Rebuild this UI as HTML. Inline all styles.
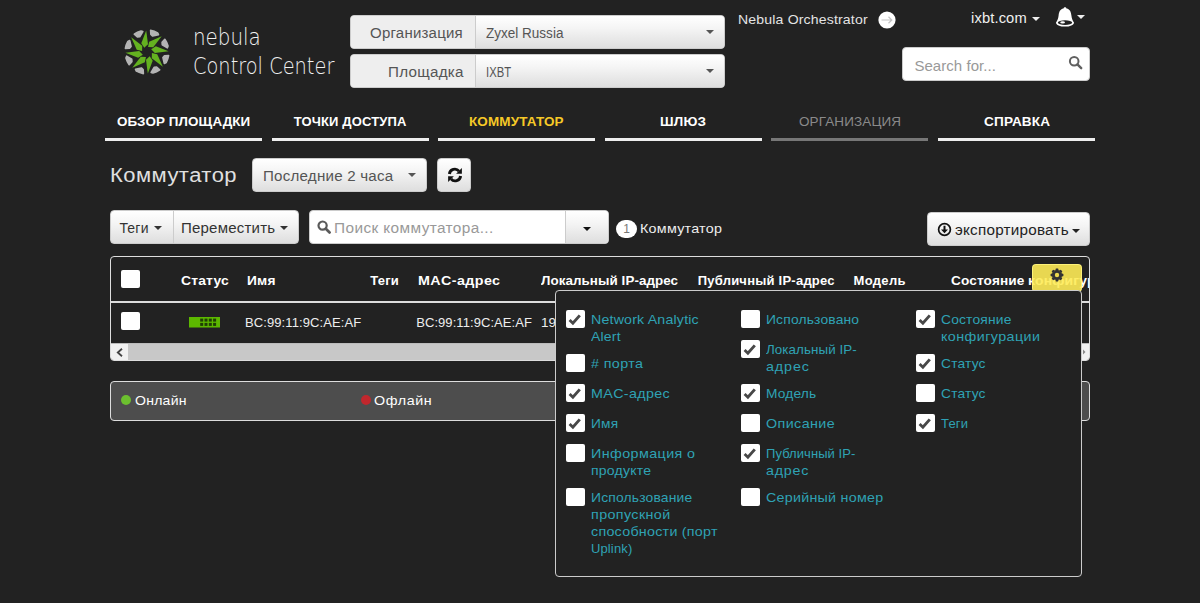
<!DOCTYPE html>
<html lang="ru"><head><meta charset="utf-8"><title>Nebula Control Center</title><style>
html,body{margin:0;padding:0}
body{width:1200px;height:603px;background:#222;position:relative;overflow:hidden;font-family:"Liberation Sans",sans-serif}
.abs{position:absolute}
.t{position:absolute;white-space:nowrap;line-height:1}
.btn{box-sizing:border-box;border:1px solid #ccc;border-radius:4px;background:linear-gradient(#fff,#f4f4f4 40%,#dedede)}
.grad{background:linear-gradient(#fff,#f4f4f4 40%,#dedede)}
.hsel{box-sizing:border-box;border:1px solid #ccc;border-radius:4px;overflow:hidden;background:#eee}
.hsel .lab{position:absolute;left:0;top:0;width:124px;height:100%;background:#eee;border-right:1px solid #ccc}
.hsel .val{position:absolute;left:125px;top:0;right:0;height:100%;background:linear-gradient(#fff,#f4f4f4 40%,#dedede)}
.caret{position:absolute;width:0;height:0;border-left:4px solid transparent;border-right:4px solid transparent;border-top:4px solid #555}
.cb{position:absolute;width:19px;height:18px;background:#fff;border-radius:2px}
</style></head><body>
<svg class="abs" style="left:120.6px;top:26.0px" width="52" height="52" viewBox="-26 -26 52 52"><g transform="rotate(0)"><path d="M-0.8,-21.6 L-5.7,-8.8 L-2.7,-4.2 L1.0,-7.8 Z" fill="#64b220"/><path d="M3.61,-21.60 A21.9,21.9 0 0 1 10.62,-19.15 L11.48,-17.34 L5.64,-15.93 L3.87,-17.48 Z" fill="#b4b4b4" stroke="#b4b4b4" stroke-width="1.6" stroke-linejoin="round"/></g><g transform="rotate(45)"><path d="M-0.8,-21.6 L-5.7,-8.8 L-2.7,-4.2 L1.0,-7.8 Z" fill="#64b220"/><path d="M3.61,-21.60 A21.9,21.9 0 0 1 10.62,-19.15 L11.48,-17.34 L5.64,-15.93 L3.87,-17.48 Z" fill="#b4b4b4" stroke="#b4b4b4" stroke-width="1.6" stroke-linejoin="round"/></g><g transform="rotate(90)"><path d="M-0.8,-21.6 L-5.7,-8.8 L-2.7,-4.2 L1.0,-7.8 Z" fill="#64b220"/><path d="M3.61,-21.60 A21.9,21.9 0 0 1 10.62,-19.15 L11.48,-17.34 L5.64,-15.93 L3.87,-17.48 Z" fill="#b4b4b4" stroke="#b4b4b4" stroke-width="1.6" stroke-linejoin="round"/></g><g transform="rotate(135)"><path d="M-0.8,-21.6 L-5.7,-8.8 L-2.7,-4.2 L1.0,-7.8 Z" fill="#64b220"/><path d="M3.61,-21.60 A21.9,21.9 0 0 1 10.62,-19.15 L11.48,-17.34 L5.64,-15.93 L3.87,-17.48 Z" fill="#b4b4b4" stroke="#b4b4b4" stroke-width="1.6" stroke-linejoin="round"/></g><g transform="rotate(180)"><path d="M-0.8,-21.6 L-5.7,-8.8 L-2.7,-4.2 L1.0,-7.8 Z" fill="#64b220"/><path d="M3.61,-21.60 A21.9,21.9 0 0 1 10.62,-19.15 L11.48,-17.34 L5.64,-15.93 L3.87,-17.48 Z" fill="#b4b4b4" stroke="#b4b4b4" stroke-width="1.6" stroke-linejoin="round"/></g><g transform="rotate(225)"><path d="M-0.8,-21.6 L-5.7,-8.8 L-2.7,-4.2 L1.0,-7.8 Z" fill="#64b220"/><path d="M3.61,-21.60 A21.9,21.9 0 0 1 10.62,-19.15 L11.48,-17.34 L5.64,-15.93 L3.87,-17.48 Z" fill="#b4b4b4" stroke="#b4b4b4" stroke-width="1.6" stroke-linejoin="round"/></g><g transform="rotate(270)"><path d="M-0.8,-21.6 L-5.7,-8.8 L-2.7,-4.2 L1.0,-7.8 Z" fill="#64b220"/><path d="M3.61,-21.60 A21.9,21.9 0 0 1 10.62,-19.15 L11.48,-17.34 L5.64,-15.93 L3.87,-17.48 Z" fill="#b4b4b4" stroke="#b4b4b4" stroke-width="1.6" stroke-linejoin="round"/></g><g transform="rotate(315)"><path d="M-0.8,-21.6 L-5.7,-8.8 L-2.7,-4.2 L1.0,-7.8 Z" fill="#64b220"/><path d="M3.61,-21.60 A21.9,21.9 0 0 1 10.62,-19.15 L11.48,-17.34 L5.64,-15.93 L3.87,-17.48 Z" fill="#b4b4b4" stroke="#b4b4b4" stroke-width="1.6" stroke-linejoin="round"/></g></svg>
<span class="t" style="left:193.1px;top:26.2px;font-size:22.5px;font-weight:200;color:#f0f0f0;transform:scaleX(0.8835);transform-origin:0 0;font-family:'DejaVu Sans Light','DejaVu Sans',sans-serif;font-weight:200">nebula</span>
<span class="t" style="left:193.1px;top:55.4px;font-size:22.5px;font-weight:200;color:#f0f0f0;transform:scaleX(0.8607);transform-origin:0 0;font-family:'DejaVu Sans Light','DejaVu Sans',sans-serif;font-weight:200">Control Center</span>
<div class="abs hsel" style="left:350px;top:15px;width:375px;height:34px"><div class="lab"></div><div class="val"></div><i class="caret" style="left:355px;top:13.5px;border-top-color:#555"></i></div><span class="t" style="left:370.3px;top:26.3px;font-size:14px;font-weight:400;color:#555;letter-spacing:0.19px;transform:scaleX(1.0736);transform-origin:0 0;">Организация</span><span class="t" style="left:485.7px;top:26.3px;font-size:14px;font-weight:400;color:#555;transform:scaleX(0.9661);transform-origin:0 0;">Zyxel Russia</span>
<div class="abs hsel" style="left:350px;top:54px;width:375px;height:34px"><div class="lab"></div><div class="val"></div><i class="caret" style="left:355px;top:13.5px;border-top-color:#555"></i></div><span class="t" style="left:387.5px;top:65.2px;font-size:14px;font-weight:400;color:#555;letter-spacing:0.25px;transform:scaleX(1.0845);transform-origin:0 0;">Площадка</span><span class="t" style="left:485.7px;top:65.2px;font-size:14px;font-weight:400;color:#555;transform:scaleX(0.8039);transform-origin:0 0;">IXBT</span>
<span class="t" style="left:738.3px;top:12.7px;font-size:13px;font-weight:400;color:#e4e4e4;letter-spacing:0.16px;transform:scaleX(1.0806);transform-origin:0 0;">Nebula Orchestrator</span>
<svg class="abs" style="left:877.5px;top:10.5px" width="18" height="18" viewBox="0 0 18 18"><circle cx="9" cy="9" r="8.6" fill="#fff"/><path d="M3.5,9 H13.5 M10.5,5.8 L13.8,9 L10.5,12.2" fill="none" stroke="#c4c4c4" stroke-width="1.2"/></svg>
<span class="t" style="left:971.1px;top:10.6px;font-size:14px;font-weight:400;color:#f0f0f0;letter-spacing:0.12px;transform:scaleX(1.0517);transform-origin:0 0;">ixbt.com</span>
<i class="caret abs" style="left:1032px;top:17px;border-top-color:#eee"></i>
<svg class="abs" style="left:1054px;top:6px" width="22" height="22" viewBox="0 0 22 22">
<path d="M11,1.2 C11.9,1.2 12.4,1.8 12.5,2.5 C16.2,3.2 17.1,6.4 17.4,9.6 C17.7,12.6 18.5,14.6 20,16.4 C20,19 15.8,20.6 11,20.6 C6.2,20.6 2,19 2,16.4 C3.5,14.6 4.3,12.6 4.6,9.6 C4.9,6.4 5.8,3.2 9.5,2.5 C9.6,1.8 10.1,1.2 11,1.2 Z" fill="#fff"/>
<ellipse cx="11" cy="16.6" rx="7.2" ry="2.3" fill="#222"/>
<ellipse cx="8.6" cy="16.4" rx="2.4" ry="1.1" fill="#fff"/>
</svg>
<i class="caret abs" style="left:1077px;top:15px;border-top-color:#eee"></i>
<div class="abs" style="left:902px;top:47px;width:188px;height:34px;box-sizing:border-box;background:#fff;border:1px solid #ccc;border-radius:4px"></div>
<span class="t" style="left:914.4px;top:57.5px;font-size:15px;font-weight:400;color:#999;letter-spacing:0.05px;">Search for...</span>
<svg class="abs" style="left:1068px;top:54.6px" width="15" height="15" viewBox="0 0 15 15"><circle cx="6.2" cy="6.2" r="4.3" fill="none" stroke="#606060" stroke-width="2"/><path d="M9.4,9.4 L13.2,13.2" stroke="#606060" stroke-width="2.4" stroke-linecap="round"/></svg>
<div class="abs" style="left:105.0px;top:138px;width:157px;height:3px;background:#eee"></div>
<span class="t" style="left:116.9px;top:115.0px;font-size:13px;font-weight:700;color:#fff;letter-spacing:0.10px;transform:scaleX(1.0314);transform-origin:0 0;">ОБЗОР ПЛОЩАДКИ</span>
<div class="abs" style="left:271.6px;top:138px;width:157px;height:3px;background:#eee"></div>
<span class="t" style="left:293.7px;top:115.0px;font-size:13px;font-weight:700;color:#fff;letter-spacing:0.15px;">ТОЧКИ ДОСТУПА</span>
<div class="abs" style="left:438.2px;top:138px;width:157px;height:3px;background:#eee"></div>
<span class="t" style="left:469.4px;top:115.0px;font-size:13px;font-weight:700;color:#f6c927;letter-spacing:0.12px;transform:scaleX(1.0373);transform-origin:0 0;">КОММУТАТОР</span>
<div class="abs" style="left:604.8px;top:138px;width:157px;height:3px;background:#eee"></div>
<span class="t" style="left:660.3px;top:115.0px;font-size:13px;font-weight:700;color:#fff;letter-spacing:0.18px;transform:scaleX(1.0393);transform-origin:0 0;">ШЛЮЗ</span>
<div class="abs" style="left:771.4px;top:138px;width:157px;height:3px;background:#777"></div>
<span class="t" style="left:798.9px;top:115.0px;font-size:13px;font-weight:400;color:#8a8a8a;letter-spacing:0.12px;transform:scaleX(1.0371);transform-origin:0 0;">ОРГАНИЗАЦИЯ</span>
<div class="abs" style="left:938.0px;top:138px;width:157px;height:3px;background:#eee"></div>
<span class="t" style="left:983.5px;top:115.0px;font-size:13px;font-weight:700;color:#fff;letter-spacing:0.15px;transform:scaleX(1.0443);transform-origin:0 0;">СПРАВКА</span>
<span class="t" style="left:109.9px;top:164.8px;font-size:20px;font-weight:400;color:#e0e0e0;letter-spacing:0.42px;transform:scaleX(1.1000);transform-origin:0 0;">Коммутатор</span>
<div class="abs btn" style="left:252px;top:158px;width:175px;height:34px"></div>
<span class="t" style="left:262.8px;top:169.1px;font-size:14px;font-weight:400;color:#555;letter-spacing:0.20px;transform:scaleX(1.0810);transform-origin:0 0;">Последние 2 часа</span>
<i class="caret abs" style="left:408px;top:172.5px;border-top-color:#555"></i>
<div class="abs btn" style="left:437px;top:158px;width:34px;height:34px"></div>
<svg class="abs" style="left:446.6px;top:167.2px" width="16" height="16" viewBox="0 0 16 16">
<path d="M2.4,7.0 A5.4,5.4 0 0 1 12.0,4.2" fill="none" stroke="#111" stroke-width="2.9"/>
<path d="M13.6,9.0 A5.4,5.4 0 0 1 4.0,11.8" fill="none" stroke="#111" stroke-width="2.9"/>
<path d="M14.9,1.0 V6.8 H9.1 Z" fill="#111"/>
<path d="M1.1,15.0 V9.2 H6.9 Z" fill="#111"/>
</svg>
<div class="abs btn" style="left:110px;top:210px;width:189px;height:34px"><div style="position:absolute;left:62px;top:0;width:1px;height:32px;background:#ccc"></div></div>
<span class="t" style="left:119.4px;top:221.1px;font-size:14px;font-weight:400;color:#333;letter-spacing:0.21px;">Теги</span>
<i class="caret abs" style="left:154px;top:226px;border-top-color:#333"></i>
<span class="t" style="left:181.4px;top:221.1px;font-size:14px;font-weight:400;color:#333;letter-spacing:0.19px;transform:scaleX(1.0729);transform-origin:0 0;">Переместить</span>
<i class="caret abs" style="left:280px;top:226px;border-top-color:#333"></i>
<div class="abs" style="left:309px;top:210px;width:300px;height:34px;box-sizing:border-box;background:#fff;border:1px solid #ccc;border-radius:4px;overflow:hidden"><div class="grad" style="position:absolute;left:255px;top:0;width:44px;height:32px;border-left:1px solid #ccc"></div></div>
<svg class="abs" style="left:316.6px;top:219.8px" width="15" height="15" viewBox="0 0 15 15"><circle cx="5.6" cy="5.6" r="4.1" fill="none" stroke="#5a5a5a" stroke-width="2.2"/><path d="M8.8,8.8 L12.6,12.4" stroke="#5a5a5a" stroke-width="2.8" stroke-linecap="round"/></svg>
<span class="t" style="left:334.3px;top:221.1px;font-size:14px;font-weight:400;color:#999;letter-spacing:0.35px;transform:scaleX(1.1000);transform-origin:0 0;">Поиск коммутатора...</span>
<i class="caret abs" style="left:583px;top:227px;border-top-color:#111"></i>
<div class="abs" style="left:616px;top:220px;width:21px;height:18px;border-radius:9px;background:#fff"></div>
<span class="t" style="left:623.2px;top:223px;font-size:12px;color:#777">1</span>
<span class="t" style="left:640.3px;top:221.5px;font-size:13px;font-weight:400;color:#eee;letter-spacing:0.24px;transform:scaleX(1.0993);transform-origin:0 0;">Коммутатор</span>
<div class="abs btn" style="left:927px;top:212px;width:163px;height:34px"></div>
<svg class="abs" style="left:936.8px;top:221.5px" width="15" height="15" viewBox="0 0 15 15"><circle cx="7.5" cy="7.5" r="5.9" fill="none" stroke="#111" stroke-width="1.7"/><path d="M6.5,3.8 H8.5 V7.6 H11 L7.5,11.2 L4,7.6 H6.5 Z" fill="#111"/></svg>
<span class="t" style="left:954.9px;top:223.1px;font-size:14px;font-weight:400;color:#222;letter-spacing:0.21px;transform:scaleX(1.0892);transform-origin:0 0;">экспортировать</span>
<i class="caret abs" style="left:1072px;top:229px;border-top-color:#222"></i>
<div class="abs" id="tbl" style="left:110px;top:256px;width:980px;height:105px;border:1px solid #ddd;border-radius:4px;overflow:hidden;box-sizing:border-box">
<div style="position:absolute;left:0;top:44px;width:978px;height:2px;background:#ddd"></div>
<div style="position:absolute;left:0;top:85.5px;width:978px;height:1px;background:#bbb"></div>
<div style="position:absolute;left:0;top:86.5px;width:978px;height:17px;background:#c8c8c8"></div>
<div style="position:absolute;left:0;top:86.5px;width:17px;height:17px;background:#f1f1f1"></div>
<div style="position:absolute;left:961px;top:86.5px;width:17px;height:17px;background:#f1f1f1"></div>
<svg style="position:absolute;left:5px;top:90.5px" width="8" height="9" viewBox="0 0 8 9"><path d="M6,0.8 L1.8,4.5 L6,8.2" fill="none" stroke="#444" stroke-width="1.8"/></svg>
<svg style="position:absolute;left:971px;top:92px" width="5" height="6" viewBox="0 0 5 6"><path d="M1,0.5 L3.5,3 L1,5.5 Z" fill="#888"/></svg>
<div class="cb" style="left:10px;top:13px"></div>
<div class="cb" style="left:10px;top:55px"></div>
<svg style="position:absolute;left:77.5px;top:59.5px" width="31" height="11" viewBox="0 0 31 11"><rect x="0" y="0" width="31" height="10.5" fill="#5cb800"/><rect x="11.2" y="1.6" width="3" height="3" fill="#1f3f05"/><rect x="15.5" y="1.6" width="3" height="3" fill="#1f3f05"/><rect x="19.8" y="1.6" width="3" height="3" fill="#1f3f05"/><rect x="24.1" y="1.6" width="3" height="3" fill="#1f3f05"/><rect x="11.2" y="5.9" width="3" height="3" fill="#1f3f05"/><rect x="15.5" y="5.9" width="3" height="3" fill="#1f3f05"/><rect x="19.8" y="5.9" width="3" height="3" fill="#1f3f05"/><rect x="24.1" y="5.9" width="3" height="3" fill="#1f3f05"/></svg>
</div>
<span class="t" style="left:180.8px;top:274.0px;font-size:13px;font-weight:700;color:#fff;letter-spacing:0.18px;transform:scaleX(1.0672);transform-origin:0 0;">Статус</span>
<span class="t" style="left:247.0px;top:274.0px;font-size:13px;font-weight:700;color:#fff;letter-spacing:0.24px;transform:scaleX(1.0563);transform-origin:0 0;">Имя</span>
<span class="t" style="left:370.3px;top:274.0px;font-size:13px;font-weight:700;color:#fff;letter-spacing:0.20px;">Теги</span>
<span class="t" style="left:418.2px;top:274.0px;font-size:13px;font-weight:700;color:#fff;letter-spacing:0.37px;transform:scaleX(1.1000);transform-origin:0 0;">MAC-адрес</span>
<span class="t" style="left:541.4px;top:274.0px;font-size:13px;font-weight:700;color:#fff;letter-spacing:0.07px;transform:scaleX(1.0296);transform-origin:0 0;">Локальный IP-адрес</span>
<span class="t" style="left:697.7px;top:274.0px;font-size:13px;font-weight:700;color:#fff;letter-spacing:0.23px;">Публичный IP-адрес</span>
<span class="t" style="left:853.5px;top:274.0px;font-size:13px;font-weight:700;color:#fff;letter-spacing:0.34px;">Модель</span>
<div class="abs" style="left:940px;top:270px;width:149px;height:20px;overflow:hidden">
<span class="t" style="left:10.8px;top:4.0px;font-size:13px;font-weight:700;color:#fff;letter-spacing:0.13px;transform:scaleX(1.0481);transform-origin:0 0;">Состояние</span>
<span class="t" style="left:87.8px;top:4.0px;font-size:13px;font-weight:700;color:#fff;letter-spacing:0.18px;transform:scaleX(1.0694);transform-origin:0 0;">конфигурации</span>
</div>
<span class="t" style="left:245.0px;top:316.2px;font-size:13px;font-weight:400;color:#eee;letter-spacing:0.09px;">BC:99:11:9C:AE:AF</span>
<span class="t" style="left:416.2px;top:316.2px;font-size:13px;font-weight:400;color:#eee;letter-spacing:0.07px;">BC:99:11:9C:AE:AF</span>
<div class="abs" style="left:535px;top:312px;width:20px;height:22px;overflow:hidden">
<span class="t" style="left:5.9px;top:4.2px;font-size:13px;font-weight:400;color:#eee;letter-spacing:0.08px;transform:scaleX(1.0369);transform-origin:0 0;">192.168.1.37</span>
</div>
<div class="abs" style="left:110px;top:381px;width:980px;height:40px;box-sizing:border-box;border:1px solid #ddd;border-radius:4px;background:#4d4d4d"></div>
<div class="abs" style="left:120.6px;top:394.8px;width:10.4px;height:10.4px;border-radius:50%;background:#6cc02f"></div>
<span class="t" style="left:134.8px;top:393.8px;font-size:13px;font-weight:400;color:#fff;letter-spacing:0.23px;transform:scaleX(1.0802);transform-origin:0 0;">Онлайн</span>
<div class="abs" style="left:360.7px;top:394.8px;width:10.4px;height:10.4px;border-radius:50%;background:#c1272d"></div>
<span class="t" style="left:374.3px;top:393.8px;font-size:13px;font-weight:400;color:#fff;letter-spacing:0.52px;transform:scaleX(1.1000);transform-origin:0 0;">Офлайн</span>
<div class="abs" style="left:1032px;top:264px;width:50px;height:28px;box-sizing:border-box;border:1px solid rgba(255,244,125,0.9);border-radius:4px;background:rgba(254,235,87,0.9)"></div>
<svg class="abs" style="left:1050.1px;top:268.3px" width="14" height="14" viewBox="-7 -7 14 14"><g fill="#333"><circle r="4.6"/><path d="M-1.9,-4 L-1.1,-6.4 L1.1,-6.4 L1.9,-4 Z" transform="rotate(0)"/><path d="M-1.9,-4 L-1.1,-6.4 L1.1,-6.4 L1.9,-4 Z" transform="rotate(45)"/><path d="M-1.9,-4 L-1.1,-6.4 L1.1,-6.4 L1.9,-4 Z" transform="rotate(90)"/><path d="M-1.9,-4 L-1.1,-6.4 L1.1,-6.4 L1.9,-4 Z" transform="rotate(135)"/><path d="M-1.9,-4 L-1.1,-6.4 L1.1,-6.4 L1.9,-4 Z" transform="rotate(180)"/><path d="M-1.9,-4 L-1.1,-6.4 L1.1,-6.4 L1.9,-4 Z" transform="rotate(225)"/><path d="M-1.9,-4 L-1.1,-6.4 L1.1,-6.4 L1.9,-4 Z" transform="rotate(270)"/><path d="M-1.9,-4 L-1.1,-6.4 L1.1,-6.4 L1.9,-4 Z" transform="rotate(315)"/></g><circle r="2.2" fill="#ecd84e"/></svg>
<div class="abs" style="left:555px;top:290px;width:527px;height:287px;box-sizing:border-box;border:1px solid #ccc;border-radius:4px;background:#222"></div>
<div class="abs cb" style="left:566px;top:310px"><svg width="19" height="18" viewBox="0 0 19 18"><path d="M3.6,10 L6.9,13.2 L13.8,5.4" fill="none" stroke="#484848" stroke-width="2.9"/></svg></div>
<span class="t" style="left:590.9px;top:312.6px;font-size:13px;font-weight:400;color:#2fa2b5;letter-spacing:0.18px;transform:scaleX(1.0901);transform-origin:0 0;">Network Analytic</span>
<span class="t" style="left:590.9px;top:329.8px;font-size:13px;font-weight:400;color:#2fa2b5;letter-spacing:0.17px;transform:scaleX(1.0815);transform-origin:0 0;">Alert</span>
<div class="abs cb" style="left:566px;top:354px"></div>
<span class="t" style="left:590.9px;top:356.6px;font-size:13px;font-weight:400;color:#2fa2b5;letter-spacing:0.35px;transform:scaleX(1.1000);transform-origin:0 0;"># порта</span>
<div class="abs cb" style="left:566px;top:384px"><svg width="19" height="18" viewBox="0 0 19 18"><path d="M3.6,10 L6.9,13.2 L13.8,5.4" fill="none" stroke="#484848" stroke-width="2.9"/></svg></div>
<span class="t" style="left:590.9px;top:386.6px;font-size:13px;font-weight:400;color:#2fa2b5;letter-spacing:0.32px;transform:scaleX(1.1000);transform-origin:0 0;">MAC-адрес</span>
<div class="abs cb" style="left:566px;top:414px"><svg width="19" height="18" viewBox="0 0 19 18"><path d="M3.6,10 L6.9,13.2 L13.8,5.4" fill="none" stroke="#484848" stroke-width="2.9"/></svg></div>
<span class="t" style="left:590.9px;top:416.6px;font-size:13px;font-weight:400;color:#2fa2b5;letter-spacing:0.20px;transform:scaleX(1.0507);transform-origin:0 0;">Имя</span>
<div class="abs cb" style="left:566px;top:444px"></div>
<span class="t" style="left:590.9px;top:446.6px;font-size:13px;font-weight:400;color:#2fa2b5;letter-spacing:0.38px;transform:scaleX(1.1000);transform-origin:0 0;">Информация о</span>
<span class="t" style="left:590.9px;top:463.8px;font-size:13px;font-weight:400;color:#2fa2b5;letter-spacing:0.19px;transform:scaleX(1.0812);transform-origin:0 0;">продукте</span>
<div class="abs cb" style="left:566px;top:488px"></div>
<span class="t" style="left:590.9px;top:490.6px;font-size:13px;font-weight:400;color:#2fa2b5;letter-spacing:0.16px;transform:scaleX(1.0665);transform-origin:0 0;">Использование</span>
<span class="t" style="left:590.9px;top:507.8px;font-size:13px;font-weight:400;color:#2fa2b5;letter-spacing:0.36px;transform:scaleX(1.1000);transform-origin:0 0;">пропускной</span>
<span class="t" style="left:590.9px;top:525.0px;font-size:13px;font-weight:400;color:#2fa2b5;letter-spacing:0.23px;transform:scaleX(1.1000);transform-origin:0 0;">способности (порт</span>
<span class="t" style="left:590.9px;top:542.2px;font-size:13px;font-weight:400;color:#2fa2b5;letter-spacing:0.15px;">Uplink)</span>
<div class="abs cb" style="left:741px;top:310px"></div>
<span class="t" style="left:766.0px;top:312.6px;font-size:13px;font-weight:400;color:#2fa2b5;letter-spacing:0.16px;transform:scaleX(1.0648);transform-origin:0 0;">Использовано</span>
<div class="abs cb" style="left:741px;top:340px"><svg width="19" height="18" viewBox="0 0 19 18"><path d="M3.6,10 L6.9,13.2 L13.8,5.4" fill="none" stroke="#484848" stroke-width="2.9"/></svg></div>
<span class="t" style="left:766.0px;top:342.6px;font-size:13px;font-weight:400;color:#2fa2b5;letter-spacing:0.07px;transform:scaleX(1.0292);transform-origin:0 0;">Локальный IP-</span>
<span class="t" style="left:766.0px;top:359.8px;font-size:13px;font-weight:400;color:#2fa2b5;letter-spacing:0.81px;transform:scaleX(1.1000);transform-origin:0 0;">адрес</span>
<div class="abs cb" style="left:741px;top:384px"><svg width="19" height="18" viewBox="0 0 19 18"><path d="M3.6,10 L6.9,13.2 L13.8,5.4" fill="none" stroke="#484848" stroke-width="2.9"/></svg></div>
<span class="t" style="left:766.0px;top:386.6px;font-size:13px;font-weight:400;color:#2fa2b5;letter-spacing:0.16px;transform:scaleX(1.0557);transform-origin:0 0;">Модель</span>
<div class="abs cb" style="left:741px;top:414px"></div>
<span class="t" style="left:766.0px;top:416.6px;font-size:13px;font-weight:400;color:#2fa2b5;letter-spacing:0.37px;transform:scaleX(1.1000);transform-origin:0 0;">Описание</span>
<div class="abs cb" style="left:741px;top:444px"><svg width="19" height="18" viewBox="0 0 19 18"><path d="M3.6,10 L6.9,13.2 L13.8,5.4" fill="none" stroke="#484848" stroke-width="2.9"/></svg></div>
<span class="t" style="left:766.0px;top:446.6px;font-size:13px;font-weight:400;color:#2fa2b5;letter-spacing:0.07px;">Публичный IP-</span>
<span class="t" style="left:766.0px;top:463.8px;font-size:13px;font-weight:400;color:#2fa2b5;letter-spacing:0.70px;transform:scaleX(1.1000);transform-origin:0 0;">адрес</span>
<div class="abs cb" style="left:741px;top:488px"></div>
<span class="t" style="left:766.0px;top:490.6px;font-size:13px;font-weight:400;color:#2fa2b5;letter-spacing:0.24px;transform:scaleX(1.0975);transform-origin:0 0;">Серийный номер</span>
<div class="abs cb" style="left:916px;top:310px"><svg width="19" height="18" viewBox="0 0 19 18"><path d="M3.6,10 L6.9,13.2 L13.8,5.4" fill="none" stroke="#484848" stroke-width="2.9"/></svg></div>
<span class="t" style="left:941.0px;top:312.6px;font-size:13px;font-weight:400;color:#2fa2b5;letter-spacing:0.16px;transform:scaleX(1.0632);transform-origin:0 0;">Состояние</span>
<span class="t" style="left:941.0px;top:329.8px;font-size:13px;font-weight:400;color:#2fa2b5;letter-spacing:0.39px;transform:scaleX(1.1000);transform-origin:0 0;">конфигурации</span>
<div class="abs cb" style="left:916px;top:354px"><svg width="19" height="18" viewBox="0 0 19 18"><path d="M3.6,10 L6.9,13.2 L13.8,5.4" fill="none" stroke="#484848" stroke-width="2.9"/></svg></div>
<span class="t" style="left:941.0px;top:356.6px;font-size:13px;font-weight:400;color:#2fa2b5;letter-spacing:0.16px;transform:scaleX(1.0626);transform-origin:0 0;">Статус</span>
<div class="abs cb" style="left:916px;top:384px"></div>
<span class="t" style="left:941.0px;top:386.6px;font-size:13px;font-weight:400;color:#2fa2b5;letter-spacing:0.16px;transform:scaleX(1.0626);transform-origin:0 0;">Статус</span>
<div class="abs cb" style="left:916px;top:414px"><svg width="19" height="18" viewBox="0 0 19 18"><path d="M3.6,10 L6.9,13.2 L13.8,5.4" fill="none" stroke="#484848" stroke-width="2.9"/></svg></div>
<span class="t" style="left:941.0px;top:416.6px;font-size:13px;font-weight:400;color:#2fa2b5;letter-spacing:0.20px;">Теги</span>
</body></html>
